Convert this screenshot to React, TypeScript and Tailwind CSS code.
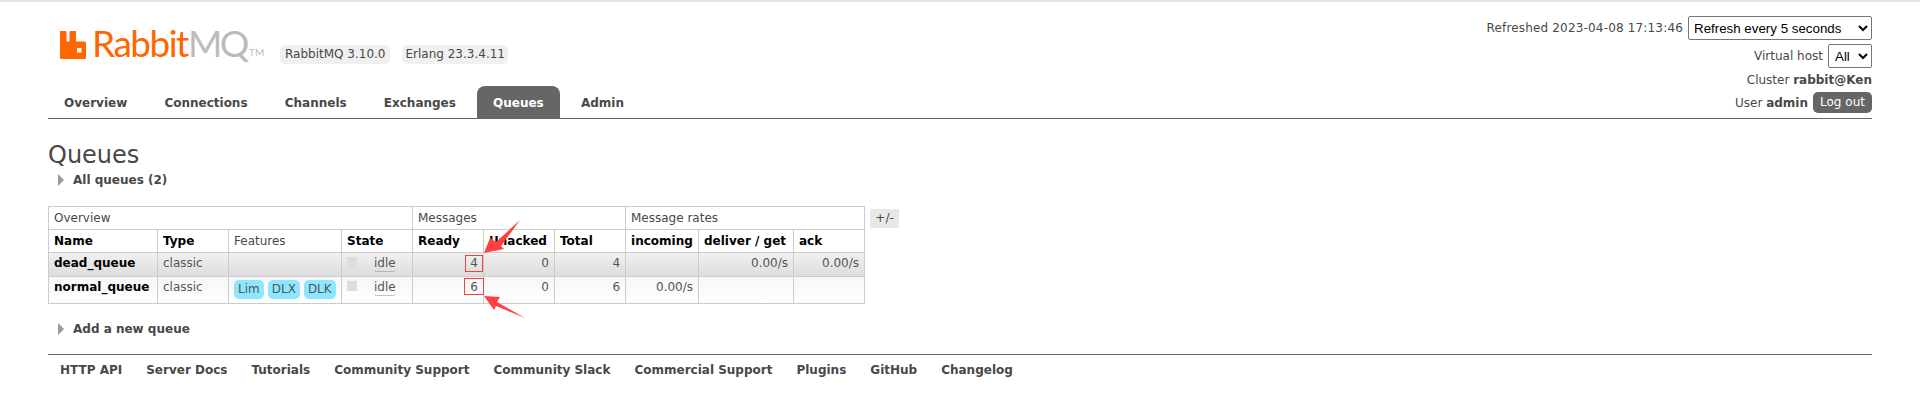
import React from 'react'

const tabs = ['Overview', 'Connections', 'Channels', 'Exchanges', 'Queues', 'Admin']
const footerLinks = ['HTTP API', 'Server Docs', 'Tutorials', 'Community Support', 'Community Slack', 'Commercial Support', 'Plugins', 'GitHub', 'Changelog']

const Triangle = () => (
    <span className="w-0 h-0 border-y-[6px] border-y-transparent border-l-[6px] border-l-[#999] mr-[9px]" />
)

const th = 'border border-[#ccc] px-[5px] h-[23px] text-left align-middle'
const td = 'border border-[#ccc] px-[5px] pt-[2px] align-top text-[#555]'
const num = td + ' text-right'

const Pill = ({ title }: { title: string }) => (
    <span className="inline-block bg-[#8de8ff] text-[#555] rounded-[5px] px-1 leading-[19px] mr-1 mt-[1px]">{title}</span>
)

const State = () => (
    <div className="flex">
        <span className="w-[10px] h-[10px] bg-[#ddd] mt-[2px] mr-[17px]" />
        <span className="border-b border-dotted border-[#888] rounded-b-[3px] leading-[17px] h-[17px]">idle</span>
    </div>
)

export default function App() {
    return (
        <div className="relative w-[1920px] h-[407px] overflow-hidden bg-white text-[12px] text-[#484848] font-['DejaVu_Sans',sans-serif]">
            <div className="h-[2px] bg-[#e4e4e4]" />
            <div className="px-12">
                <div className="h-[116px] flex justify-between">
                    <div className="flex flex-col">
                        <div className="flex h-[84px] pl-3 pt-[18px]">
                            <svg width="26" height="28" viewBox="0 0 26 28" className="mt-[11px] shrink-0">
                                <path fill="#ff6600" fillRule="evenodd" d="M1 0h4.500a1 1 0 0 1 1 1v9.500h3V1a1 1 0 0 1 1-1H15a1 1 0 0 1 1 1v9.500h8.500a1.500 1.500 0 0 1 1.500 1.500v14.500a1.500 1.500 0 0 1-1.500 1.500H1.500A1.500 1.500 0 0 1 0 26.500V1a1 1 0 0 1 1-1zM17 17v4.500h4.500V17z" />
                            </svg>
                            <div className="ml-[6px] mt-[1px] h-10 leading-[44px] text-[37px] font-['Lato',sans-serif] font-normal whitespace-nowrap w-[188px] flex">
                                <span className="text-[#ff6600] w-[96px] tracking-[-1.5px]">Rabbit</span>
                                <span className="text-[#bbb] w-[61px] tracking-[-2.5px]">MQ</span>
                                <span className="text-[#bbb] text-[10px] leading-[62px]">TM</span>
                            </div>
                            <span className="mt-[25px] h-[19px] leading-[19px] bg-[#f0f0f0] rounded-[5px] px-[5px] whitespace-nowrap">RabbitMQ 3.10.0</span>
                            <span className="ml-3 mt-[25px] h-[19px] leading-[19px] bg-[#f0f0f0] rounded-[5px] px-[3px] whitespace-nowrap">Erlang 23.3.4.11</span>
                        </div>
                        <ul className="flex gap-[5.15px] font-bold">
                            {tabs.map((tab) => (
                                <li key={tab} className={tab === 'Queues' ? 'px-4 h-8 leading-[34px] bg-[#666] text-white rounded-t-[8px]' : 'px-4 h-8 leading-[34px]'}>
                                    {tab}
                                </li>
                            ))}
                        </ul>
                    </div>
                    <div className="flex flex-col items-end">
                        <div className="flex items-center mt-[14px] h-6">
                            <span className="mr-[5px] tracking-[0.17px]">Refreshed 2023-04-08 17:13:46</span>
                            <select defaultValue="5" className="w-[184px] h-6 border border-[#767676] rounded-[2px] bg-white text-black pl-[1px] text-[13.333px] font-['Liberation_Sans',sans-serif]">
                                <option value="5">Refresh every 5 seconds</option>
                            </select>
                        </div>
                        <div className="flex items-center mt-1 h-6">
                            <span className="mr-[5px]">Virtual host</span>
                            <select defaultValue="all" className="w-[44px] h-6 border border-[#767676] rounded-[2px] bg-white text-black pl-[2px] text-[13.333px] font-['Liberation_Sans',sans-serif]">
                                <option value="all">All</option>
                            </select>
                        </div>
                        <div className="mt-[4px] h-[17px] leading-[17px]">Cluster <b>rabbit@Ken</b></div>
                        <div className="flex items-center mt-[3px]">
                            <span>User <b>admin</b></span>
                            <button className="ml-[5px] w-[59px] h-[21px] bg-[#666] text-white rounded-[5px] text-center leading-[21px]">Log out</button>
                        </div>
                    </div>
                </div>
                <div className="h-[1px] bg-[#666]" />

                <h1 className="mt-[21px] text-[24px] leading-[30px] font-normal">Queues</h1>
                <div className="flex items-center pl-[10px] mt-[3px] font-bold h-[14px]">
                    <Triangle />
                    All queues (2)
                </div>

                <div className="flex mt-[19px] items-start">
                    <table className="border-collapse table-fixed w-[816px] leading-[17px]">
                        <colgroup>
                            <col className="w-[109px]" />
                            <col className="w-[71px]" />
                            <col className="w-[113px]" />
                            <col className="w-[71px]" />
                            <col className="w-[71px]" />
                            <col className="w-[71px]" />
                            <col className="w-[71px]" />
                            <col className="w-[73px]" />
                            <col className="w-[95px]" />
                            <col className="w-[71px]" />
                        </colgroup>
                        <thead>
                            <tr>
                                <th colSpan={4} className={th + ' font-normal'}>Overview</th>
                                <th colSpan={3} className={th + ' font-normal'}>Messages</th>
                                <th colSpan={3} className={th + ' font-normal'}>Message rates</th>
                            </tr>
                            <tr className="text-black">
                                <th className={th}>Name</th>
                                <th className={th}>Type</th>
                                <th className={th + ' font-normal text-[#484848]'}>Features</th>
                                <th className={th}>State</th>
                                <th className={th}>Ready</th>
                                <th className={th}>Unacked</th>
                                <th className={th}>Total</th>
                                <th className={th}>incoming</th>
                                <th className={th}>deliver / get</th>
                                <th className={th}>ack</th>
                            </tr>
                        </thead>
                        <tbody>
                            <tr className="h-6 bg-linear-to-b from-[#f0f0f0] to-[#dcdcdc]">
                                <td className={td + ' font-bold text-black'}>dead_queue</td>
                                <td className={td}>classic</td>
                                <td className={td} />
                                <td className={td}><State /></td>
                                <td className={num}>4</td>
                                <td className={num}>0</td>
                                <td className={num}>4</td>
                                <td className={num} />
                                <td className={num}>0.00/s</td>
                                <td className={num}>0.00/s</td>
                            </tr>
                            <tr className="h-[27px] bg-linear-to-b from-[#f6f6f6] to-white">
                                <td className={td + ' font-bold text-black whitespace-nowrap'}>normal_queue</td>
                                <td className={td}>classic</td>
                                <td className={td + ' whitespace-nowrap'}>
                                    <Pill title="Lim" />
                                    <Pill title="DLX" />
                                    <Pill title="DLK" />
                                </td>
                                <td className={td}><State /></td>
                                <td className={num}>6</td>
                                <td className={num}>0</td>
                                <td className={num}>6</td>
                                <td className={num}>0.00/s</td>
                                <td className={num} />
                                <td className={num} />
                            </tr>
                        </tbody>
                    </table>
                    <span className="ml-[5px] mt-[3px] w-[29px] h-[19px] leading-[19px] text-center bg-[#e8e8e8]">+/-</span>
                </div>

                <div className="flex items-center pl-[10px] mt-[18px] font-bold h-[14px]">
                    <Triangle />
                    Add a new queue
                </div>

                <div className="mt-[18px] border-t border-[#666] flex gap-6 pl-3 pt-[7px] font-bold text-[#484848] leading-[17px]">
                    {footerLinks.map((link) => (
                        <span key={link}>{link}</span>
                    ))}
                </div>
            </div>

            {/* hand drawn annotations on the screenshot */}
            <svg className="absolute inset-0 pointer-events-none" width="1920" height="407">
                <rect x="465.500" y="255.500" width="17" height="16" fill="none" stroke="#f04040" />
                <rect x="464.500" y="278.500" width="19" height="16" fill="none" stroke="#f04040" />
                <polygon fill="#ff4040" points="484,253 490,238 496,242 520,220 501,246 504,249" />
                <polygon fill="#ff4040" points="484,296 500,297 497,302 525,318 496,306 494,310" />
            </svg>
        </div>
    )
}
